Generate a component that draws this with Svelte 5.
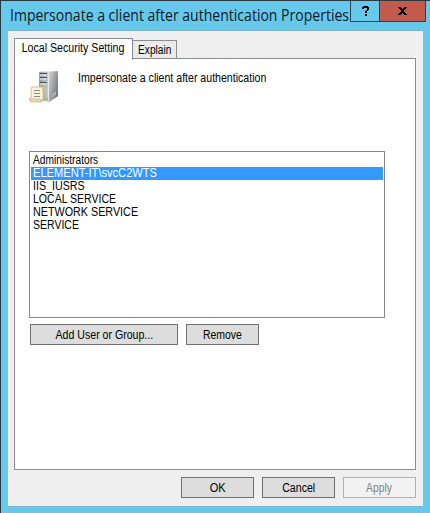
<script>
  const members = [
    { name: 'Administrators', fit: 0.85 },
    { name: 'ELEMENT-IT\\svcC2WTS', fit: 0.925 },
    { name: 'IIS_IUSRS', fit: 0.89 },
    { name: 'LOCAL SERVICE', fit: 0.877 },
    { name: 'NETWORK SERVICE', fit: 0.897 },
    { name: 'SERVICE', fit: 0.875 }
  ];
  let selected = $state(1);
</script>

{#snippet label(text, fit)}
  <span style="--fit:{fit}">{text}</span>
{/snippet}

<div class="window">
  <header>
    <h1>{@render label('Impersonate a client after authentication Properties', 0.877)}</h1>
    <div class="controls">
      <button class="help" aria-label="Help">
        <svg width="28" height="20" viewBox="0 0 28 20" shape-rendering="crispEdges"><path d="M11 7V6h1V5h5v1h1v3h-1v1h-1v2h-2v-2h1V9h1V7h-3v1h-2zM14 13h2v2h-2z" fill="#000" /></svg>
      </button>
      <button class="close" aria-label="Close">
        <svg width="45" height="20" viewBox="0 0 45 20" shape-rendering="crispEdges"><path d="M18 6h3v1h1v1h1V7h1V6h3v1h-1v1h-1v1h-1v2h1v1h1v1h1v1h-3v-1h-1v-1h-1v1h-1v1h-3v-1h1v-1h1v-1h1V9h-1V8h-1V7h-1z" fill="#000" /></svg>
      </button>
    </div>
  </header>
  <main>
    <nav>
      <button class="tab active">{@render label('Local Security Setting', 0.885)}</button>
      <button class="tab">{@render label('Explain', 0.845)}</button>
    </nav>
    <section>
      <div class="policy">
        <svg width="30" height="32" viewBox="0 0 30 32">
          <defs>
            <linearGradient id="side" x2="1" y2=".6"><stop offset="0" stop-color="#dcdcdc" /><stop offset="1" stop-color="#77797b" /></linearGradient>
            <linearGradient id="front"><stop offset="0" stop-color="#999da1" /><stop offset=".5" stop-color="#c8cccf" /><stop offset="1" stop-color="#a6aaad" /></linearGradient>
          </defs>
          <path d="M10 1L19 0h10v25l-9 6-10-2z" fill="url(#front)" />
          <path d="M19 1l10-1v25l-9 6z" fill="url(#side)" />
          <path d="M10 1L18 0h11l-9 1z" fill="#e7e7e7" />
          <path d="M11 2.5h7M11 6.5h7M11 11.5h7" stroke="#475158" />
          <path d="M11 4h6M11 8h6M11 13h6" stroke="#eef1f2" />
          <path d="M19.5 2v28" stroke="#e8e8e8" />
          <path d="M22 27v-3l5-4v3z" fill="#999" />
          <path d="M23 26l4-3M23 24l4-3" stroke="#dedede" stroke-dasharray="1 1" />
          <path d="M3 16h12l-1 3v10H2V18z" fill="#fff2ce" stroke="#cfb27f" stroke-width=".8" />
          <path d="M13 16h2l1 3h-3z" fill="#e0bd7c" />
          <path d="M5 19.5h6M5 22.5h6M5 25.5h6" stroke="#8087a8" />
          <path d="M0 28h11l2 3H2z" fill="#efd6a3" stroke="#c2a574" stroke-width=".6" />
          <path d="M16 27h3v2h-3z" fill="#75df20" />
        </svg>
        <p>{@render label('Impersonate a client after authentication', 0.882)}</p>
      </div>
      <ul>
        {#each members as m, i}
          <li class:selected={i === selected}>{@render label(m.name, m.fit)}</li>
        {/each}
      </ul>
      <div class="actions">
        <button class="btn add">{@render label('Add User or Group...', 0.882)}</button>
        <button class="btn">{@render label('Remove', 0.87)}</button>
      </div>
    </section>
    <footer>
      <button class="btn default">{@render label('OK', 0.92)}</button>
      <button class="btn">{@render label('Cancel', 0.885)}</button>
      <button class="btn disabled" disabled>{@render label('Apply', 0.86)}</button>
    </footer>
  </main>
</div>

<style>
  * { box-sizing: border-box; }
  .window {
    width: 430px; height: 513px; overflow: hidden;
    background: #66c8eb; border-top: 1px solid #2c3840; border-left: 1px solid #243b47;
    padding-left: 7px; color: #000;
    font: 12px/13px "Liberation Sans", Arial, sans-serif;
  }
  button { font: inherit; color: inherit; padding: 0; margin: 0; border-radius: 0; }
  span { display: inline-block; white-space: pre; transform: scaleX(var(--fit)); transform-origin: left; }
  button span { transform-origin: center; }
  header { height: 29px; display: flex; justify-content: space-between; padding-right: 5px; }
  h1 {
    margin: 0; padding: 4px 0 0 2px; width: 342px; white-space: nowrap;
    font: 16px/21px "Open Sans", "Noto Sans", sans-serif; color: #10202a;
  }
  .controls { display: flex; height: 21px; }
  .controls button { border: 1px solid #31424d; border-top: 0; height: 21px; display: flex; background: #66c8eb; }
  .controls .help { width: 29px; border-right: 0; }
  .controls .close { width: 47px; background: #c25b4e; border-color: #493434; }
  main {
    width: 415px; height: 477px; background: #efefef; padding: 7px 7px 0 6px;
    border-top: 1px solid #80b3cb; border-bottom: 1px solid #80b3cb;
  }
  nav { height: 20px; display: flex; align-items: flex-end; }
  .tab {
    display: flex; align-items: center; justify-content: center;
    background: #ebebeb; border: 1px solid #898c95; border-bottom: 0; border-left: 0;
    width: 44px; height: 18px; padding-top: 1px;
  }
  .tab.active {
    width: 119px; height: 22px; margin-bottom: -2px; padding: 0 0 2px;
    background: #fff; border-left: 1px solid #898c95; position: relative;
  }
  section { height: 412px; border: 1px solid #898c95; background: #fff; padding: 12px 0 0 14px; }
  .policy { display: flex; height: 80px; }
  .policy svg { flex: none; }
  p { margin: 1px 0 0 19px; }
  ul { list-style: none; width: 356px; height: 167px; margin: 0; padding: 2px 1px; border: 1px solid #828790; }
  li { height: 13px; padding-left: 2px; }
  li.selected { background: #3399ff; color: #fff; }
  .actions { display: flex; gap: 8px; padding: 6px 0 0 1px; }
  .btn {
    display: flex; align-items: center; justify-content: center;
    width: 73px; height: 21px; border: 1px solid #707070; background: #ddd; padding-top: 1px;
  }
  .btn.add { width: 148px; }
  footer { display: flex; justify-content: flex-end; gap: 8px; padding: 7px 0 0; }
  .btn.default { border-color: #3c7fb1; }
  .btn.disabled { background: #f2f2f2; border-color: #adb2b5; color: #838383; }
</style>
